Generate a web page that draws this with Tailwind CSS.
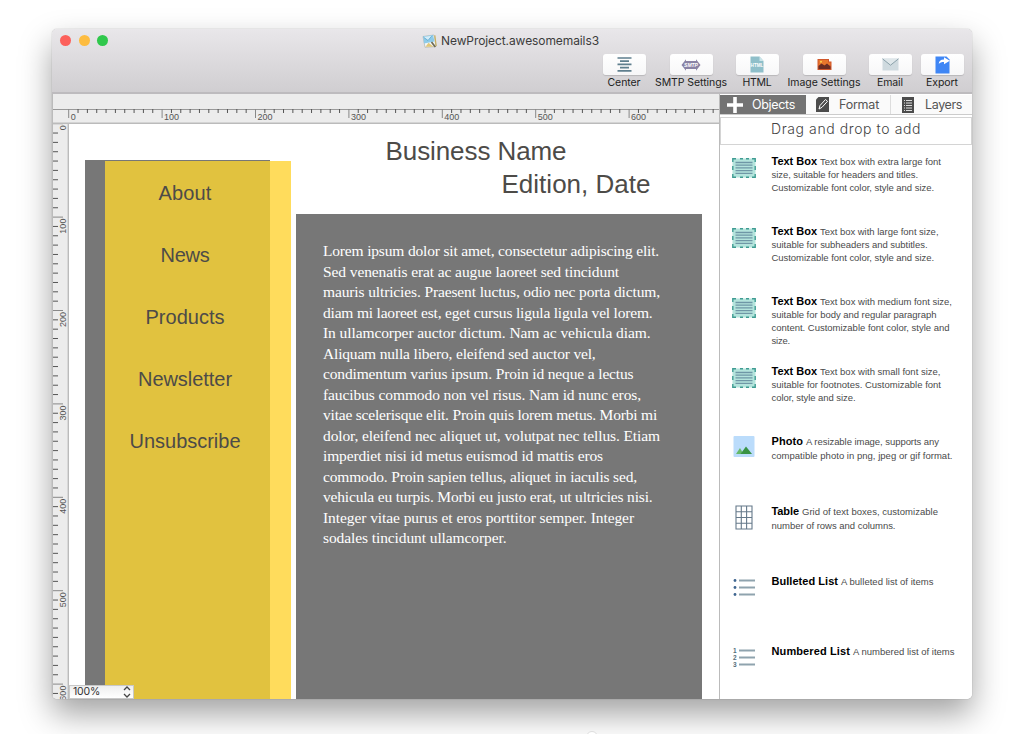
<!DOCTYPE html>
<html lang="en">
<head>
<meta charset="utf-8">
<title>NewProject.awesomemails3</title>
<script src="https://cdn.jsdelivr.net/npm/@tailwindcss/browser@4"></script>
</head>
<body class="bg-white w-[1024px] h-[734px] overflow-hidden relative font-['Liberation_Sans',sans-serif]">
<svg class="hidden">
  <symbol id="textbox" viewBox="0 0 24 20">
    <rect x=".5" y=".5" width="23" height="19" fill="#b4e4dc"/>
    <path d="M.8 4V.8H4M8 .8h3M14 .8h3M20 .8h3.200V4M23.200 8v4M23.200 16v3.200H20M17 19.200h-3M11 19.200H8M4 19.200H.8V16M.8 12V8" fill="none" stroke="#3f9c92" stroke-width="1.400"/>
    <path d="M3.500 4.500h17M3.500 7.200h17M3.500 9.900h17M3.500 12.600h17M3.500 15.300h17" stroke="#6f97a6" stroke-width="1.300"/>
  </symbol>
</svg>

<main class="ml-[52px] mt-[29px] w-[920px] h-[670px] rounded-[5px] overflow-hidden bg-white flex flex-col shadow-[0_0_1px_rgba(0,0,0,0.45),0_15px_32px_rgba(0,0,0,0.37)]">
  <header class="h-[65px] shrink-0 bg-linear-to-b from-[#e9e7ea] to-[#d0ced1] border-b-2 border-[#bdbbbe] flex flex-col">
    <div class="relative h-[24px] flex items-center justify-center">
      <div class="absolute left-[8px] top-[6px] flex gap-[7.5px]">
        <i class="size-[11px] rounded-full bg-[#fc605b]"></i><i class="size-[11px] rounded-full bg-[#fdbc40]"></i><i class="size-[11px] rounded-full bg-[#30c84c]"></i>
      </div>
      <div class="flex items-center -ml-[3px]">
      <svg class="w-[15px] h-[14px] mr-[4px]" viewBox="0 0 15 14"><path d="M1 2.5 12 1l2 11.5-11 .8z" fill="#f3f6f5" stroke="#a5aaa5" stroke-width=".6"/><path d="M1.200 2.500 11 1l1.500 6.500L2 9.500z" fill="#8ecbe9"/><path d="M1.300 3 6 6.500l4-4.800" fill="#d4edf8" stroke="#4f9fca" stroke-width=".7"/><path d="m3.500 12.700 3-4 5 4z" fill="#e1c779"/><path d="m9.500 8 3.800 5" stroke="#6d6a55" stroke-width="1.700"/><path d="M12.800 1.300 14.200 12" stroke="#c7b05e" stroke-width="1.200"/></svg>
      <span class="font-[Inter,sans-serif] text-[12px] leading-[24px] text-[#3c3c3c] whitespace-nowrap" data-w="158">NewProject.awesomemails3</span>
      </div>
    </div>
    <div class="flex ml-[550.5px] font-[Inter,sans-serif] text-[10.5px] text-[#222]">
      <div class="w-[43px] flex flex-col items-center"><b class="w-[43px] h-[21px] mt-px rounded-[3px] bg-linear-to-b from-white to-[#f7f7f8] shadow-[0_1px_1px_#b9b7ba] flex items-center justify-center"><svg class="w-[15px] h-[15px]" viewBox="0 0 15 15"><path d="M.5 1h14M3 4.200h9M.5 7.400h14M3 10.600h9M.5 13.800h14" stroke="#5f7f8e" stroke-width="1.700"/></svg></b><span class="leading-[13px] mt-px whitespace-nowrap" data-w="33">Center</span></div>
      <div class="w-[43px] ml-[24px] flex flex-col items-center"><b class="w-[43px] h-[21px] mt-px rounded-[3px] bg-linear-to-b from-white to-[#f7f7f8] shadow-[0_1px_1px_#b9b7ba] flex items-center justify-center"><svg class="w-[20px] h-[12px]" viewBox="0 0 20 12"><path d="M.5 6 5 .3v1.700h10V.3L19.500 6 15 11.700V10H5v1.700z" fill="#8a83a5"/><text x="10" y="8" text-anchor="middle" font-family="Liberation Sans" font-weight="bold" font-style="italic" font-size="5" fill="#fff">SMTP</text></svg></b><span class="leading-[13px] mt-px whitespace-nowrap" data-w="72">SMTP Settings</span></div>
      <div class="w-[43px] ml-[23px] flex flex-col items-center"><b class="w-[43px] h-[21px] mt-px rounded-[3px] bg-linear-to-b from-white to-[#f7f7f8] shadow-[0_1px_1px_#b9b7ba] flex items-center justify-center"><svg class="w-[14px] h-[17px]" viewBox="0 0 14 17"><path d="M.5.5h9L13.5 5v11.5H.5z" fill="#8fbfca"/><path d="M9.5.5V5h4z" fill="#cce6ea"/><text x="7" y="10.5" text-anchor="middle" font-family="Liberation Sans" font-weight="bold" font-size="4.6" fill="#fff">HTML</text></svg></b><span class="leading-[13px] mt-px whitespace-nowrap" data-w="29">HTML</span></div>
      <div class="w-[43px] ml-[24px] flex flex-col items-center"><b class="w-[43px] h-[21px] mt-px rounded-[3px] bg-linear-to-b from-white to-[#f7f7f8] shadow-[0_1px_1px_#b9b7ba] flex items-center justify-center"><svg class="w-[15px] h-[13px]" viewBox="0 0 15 13"><path d="M.5 1h11.500v2.500h2.500V12H.5z" fill="#d0562a"/><path d="M1.500 2h9.500v2.500h2.500v3H1.500z" fill="#e8762c"/><path d="m1.500 11 0-3 3-2.500 3 2 2.500-2 3.500 3V11z" fill="#6b2c22"/><circle cx="4" cy="3.800" r="1" fill="#ffd24c"/></svg></b><span class="leading-[13px] mt-px whitespace-nowrap" data-w="73">Image Settings</span></div>
      <div class="w-[43px] ml-[23px] flex flex-col items-center"><b class="w-[43px] h-[21px] mt-px rounded-[3px] bg-linear-to-b from-white to-[#f7f7f8] shadow-[0_1px_1px_#b9b7ba] flex items-center justify-center"><svg class="w-[17px] h-[13px]" viewBox="0 0 17 13"><path d="M.5.5h16v12H.5z" fill="#cfdadf"/><path d="m.5.8 8 6.400 8-6.400" fill="#dfe7ea" stroke="#8ba1aa" stroke-width="1"/></svg></b><span class="leading-[13px] mt-px whitespace-nowrap" data-w="26">Email</span></div>
      <div class="w-[43px] ml-[9px] flex flex-col items-center"><b class="w-[43px] h-[21px] mt-px rounded-[3px] bg-linear-to-b from-white to-[#f7f7f8] shadow-[0_1px_1px_#b9b7ba] flex items-center justify-center"><svg class="w-[15px] h-[18px]" viewBox="0 0 15 18"><path d="M.5.5h11l3 3v14H.5z" fill="#3f86f5"/><path d="M3.800 8c0-3 1.700-4.500 5.200-4.500V1.200L14.800 4.800 9 8.300V6C6.500 6 5 6.500 3.800 8z" fill="#fff"/></svg></b><span class="leading-[13px] mt-px whitespace-nowrap" data-w="32">Export</span></div>
    </div>
  </header>

  <div class="flex flex-1 min-h-0">
    <section class="w-[667px] flex flex-col">
      <svg id="ruler-x" class="block w-[667px] h-[30px] bg-[#ececec] shrink-0" viewBox="52 94 667 30"></svg>
      <div class="flex flex-1 min-h-0">
        <svg id="ruler-y" class="block w-[17px] h-[575px] bg-[#ececec] shrink-0" viewBox="52 124 17 575"></svg>
        <div class="relative flex-1 bg-white overflow-hidden text-[#4d4b48]">
          <div class="absolute left-[16px] top-[35.5px] w-[185px] h-[550px] bg-[#777]"></div>
          <div class="absolute left-[35.5px] top-[36.5px] w-[186.5px] h-[550px] bg-[#ffdc5c]"></div>
          <div class="absolute left-[35.5px] top-[36.5px] w-[165.5px] h-[550px] bg-[#e1c23f]"></div>
          <nav class="absolute left-[36px] top-[38px] w-[160px] flex flex-col items-center text-[20px] leading-[62px]">
            <span data-w="53">About</span><span data-w="49">News</span><span data-w="79">Products</span><span data-w="94">Newsletter</span><span data-w="111">Unsubscribe</span>
          </nav>
          <h1 class="absolute left-[316.5px] top-[9.5px] text-[26px] leading-[34px] whitespace-nowrap"><span data-w="181">Business Name</span></h1>
          <h2 class="absolute left-[432.5px] top-[43px] text-[26px] leading-[34px] whitespace-nowrap"><span data-w="149">Edition, Date</span></h2>
          <article id="copy" class="absolute left-[227px] top-[90px] w-[406px] h-[490px] bg-[#777] pl-[27px] pt-[27px] text-[15.5px] leading-[20.5px] text-white font-['Liberation_Serif',serif] whitespace-nowrap"></article>
          <div class="absolute left-0 top-[560.5px] w-[65px] h-[14px] bg-linear-to-b from-[#eee] to-white border border-[#c8c8c8] flex items-center justify-between pl-[3px] pr-[2px] font-[Inter,sans-serif] text-[10.5px] leading-[12px] text-[#333]">
            <span data-w="27">100%</span>
            <svg class="w-[8px] h-[12px]" viewBox="0 0 8 12" fill="none" stroke="#444" stroke-width="1.3"><path d="m1 4 3-3 3 3M1 8l3 3 3-3"/></svg>
          </div>
        </div>
      </div>
    </section>

    <aside class="w-[253px] border-l border-[#bbb] bg-white flex flex-col">
      <div class="flex h-[21px] shrink-0 pt-px border-b border-[#ccc] text-[12.5px] text-[#555] font-[Inter,sans-serif] leading-[19px]">
        <div class="w-[86px] bg-[#737373] text-white flex items-center pl-[7px] gap-[9px]"><svg class="size-[16px]" viewBox="0 0 16 16"><path d="M8 0v16M0 8h16" stroke="#fff" stroke-width="3.6"/></svg><span data-w="43">Objects</span></div>
        <div class="w-[85px] flex items-center pl-[10px] gap-[10px] border-r border-[#ddd] bg-[#fafafa]"><svg class="w-[13px] h-[15px]" viewBox="0 0 13 15"><path d="M2.5 0H13v15H0V2.5z" fill="#4c4c4c"/><path d="m3 12 1-3.5 5.500-6 2 1.800-5.500 6z" fill="none" stroke="#fff" stroke-width="1"/></svg><span data-w="40">Format</span></div>
        <div class="flex-1 flex items-center pl-[11px] gap-[11px] bg-[#fafafa]"><svg class="w-[12px] h-[16px]" viewBox="0 0 12 16"><path d="M0 0h12v16H0z" fill="#4c4c4c"/><path d="M4 3.5h6M4 6h6M4 8.5h6M4 11h6M4 13.5h6" stroke="#ddd"/><path d="M2 3.5h1M2 6h1M2 8.5h1M2 11h1M2 13.5h1" stroke="#ddd"/></svg><span data-w="37">Layers</span></div>
      </div>
      <div class="mt-[2px] h-[28px] shrink-0 border border-[#d4d4d4] text-center text-[14px] leading-[22px] text-[#444] font-[Inter,sans-serif] font-light"><span data-w="150">Drag and drop to add</span></div>
      <div id="objects" class="mt-[10px] text-[#4a4a4a]"></div>
    </aside>
  </div>
</main>
<i class="absolute left-[586px] top-[731px] w-[12px] h-[12px] rounded-full bg-white border border-[#ddd]"></i>

<template id="icons">
  <svg class="w-[24px] h-[20px] mt-[3px]"><use href="#textbox"/></svg>
  <svg class="w-[24px] h-[24px]" viewBox="0 0 24 24"><rect x="1.5" y="1" width="21" height="21" rx="1" fill="#bbdcfb"/><path d="m4 19 4-6 3.5 6z" fill="#66b96a"/><path d="m8.5 19 5.500-7.500 6 7.500z" fill="#399344"/></svg>
  <svg class="w-[24px] h-[26px]" viewBox="0 0 24 26"><path d="M4 1h16v23H4zM9.3 1v23M14.6 1v23M4 6.8h16M4 12.5h16M4 18.2h16" fill="none" stroke="#65798a" stroke-width="1.1"/></svg>
  <svg class="w-[24px] h-[24px]" viewBox="0 0 24 24"><path d="M7 5.5h16M7 12.5h16M7 19.5h16" stroke="#8fa3ae" stroke-width="1.8"/><g fill="#3f6690"><circle cx="3" cy="5.5" r="1.4"/><circle cx="3" cy="12.5" r="1.4"/><circle cx="3" cy="19.5" r="1.4"/></g></svg>
  <svg class="w-[24px] h-[24px]" viewBox="0 0 24 24"><path d="M7 5.5h16M7 12.5h16M7 19.5h16" stroke="#8fa3ae" stroke-width="1.8"/><g fill="#546e7a" font-family="Liberation Sans" font-weight="bold" font-size="6.5"><text x="1" y="8">1</text><text x="1" y="15">2</text><text x="1" y="22">3</text></g></svg>
</template>

<script>
const icons = [...document.getElementById('icons').content.children];
const objects = [
  [0, 'Text Box', 'Text box with extra large font', 169.5, 'size, suitable for headers and titles.', 146.5, 'Customizable font color, style and size.', 162.5],
  [0, 'Text Box', 'Text box with large font size,', 167, 'suitable for subheaders and subtitles.', 156, 'Customizable font color, style and size.', 162.5],
  [0, 'Text Box', 'Text box with medium font size,', 180.5, 'suitable for body and regular paragraph', 165, 'content. Customizable font color, style and', 178, 'size.', 18.5],
  [0, 'Text Box', 'Text box with small font size,', 169, 'suitable for footnotes. Customizable font', 169.5, 'color, style and size.', 84],
  [1, 'Photo', 'A resizable image, supports any', 167.5, 'compatible photo in png, jpeg or gif format.', 181],
  [2, 'Table', 'Grid of text boxes, customizable', 166.5, 'number of rows and columns.', 124],
  [3, 'Bulleted List', 'A bulleted list of items', 162],
  [4, 'Numbered List', 'A numbered list of items', 183]
];
const titleWidth = {'Text Box': 45.5, 'Photo': 31.5, 'Table': 27.5, 'Bulleted List': 66.5, 'Numbered List': 78.5};
const list = document.getElementById('objects');
for (const [icon, title, first, w, ...rest] of objects) {
  const row = document.createElement('div');
  row.className = 'flex h-[70px] pl-[11.5px] gap-[16px]';
  row.append(icons[icon].cloneNode(true));
  const t = titleWidth[title];
  let html = `<p class="flex items-baseline gap-[3px] h-[13px]"><b class="text-[11px] text-black" data-w="${t}">${title}</b><span data-w="${w - t - 3}">${first}</span></p>`;
  for (let i = 0; i < rest.length; i += 2) html += `<p class="${icon ? 'pt-px' : ''}"><span data-w="${rest[i + 1]}">${rest[i]}</span></p>`;
  const body = document.createElement('div');
  body.className = 'text-[9.5px] leading-[13px] whitespace-nowrap';
  body.innerHTML = html;
  row.append(body);
  list.append(row);
}

const copy = [
  ['Lorem ipsum dolor sit amet, consectetur adipiscing elit.', 336], ['Sed venenatis erat ac augue laoreet sed tincidunt', 296],
  ['mauris ultricies. Praesent luctus, odio nec porta dictum,', 337], ['diam mi laoreet est, eget cursus ligula ligula vel lorem.', 329.5],
  ['In ullamcorper auctor dictum. Nam ac vehicula diam.', 327.5], ['Aliquam nulla libero, eleifend sed auctor vel,', 272.5],
  ['condimentum varius ipsum. Proin id neque a lectus', 310.5], ['faucibus commodo non vel risus. Nam id nunc eros,', 318],
  ['vitae scelerisque elit. Proin quis lorem metus. Morbi mi', 334], ['dolor, eleifend nec aliquet ut, volutpat nec tellus. Etiam', 337],
  ['imperdiet nisi id metus euismod id mattis eros', 280], ['commodo. Proin sapien tellus, aliquet in iaculis sed,', 314],
  ['vehicula eu turpis. Morbi eu justo erat, ut ultricies nisi.', 329.5], ['Integer vitae purus et eros porttitor semper. Integer', 311],
  ['sodales tincidunt ullamcorper.', 183.5]
];
document.getElementById('copy').innerHTML = copy.map(([t, w]) => `<p><span data-w="${w}">${t}</span></p>`).join('');

const step = 9.34;
let h = '<path d="M52 109.5H719" stroke="#999" stroke-width="1.2"/><path d="M52 123.3H719" stroke="#bbb" stroke-width="1.4"/><path d="M52.5 94v30" stroke="#bbb"/>';
for (let i = 0; i < 70; i++) {
  const x = 68.7 + i * step, major = i % 10 === 0;
  h += `<path d="M${x} 109v${major ? 9 : 4}" stroke="${major ? '#888' : '#555'}"/>`;
  if (major) h += `<text x="${x + 2}" y="119.5" font-size="9" fill="#555">${i * 10}</text>`;
}
document.getElementById('ruler-x').innerHTML = h;
let v = '<path d="M52.5 124v575" stroke="#bbb"/><path d="M68.3 124v575" stroke="#bbb" stroke-width="1.4"/>';
for (let i = 0; i < 62; i++) {
  const y = 123.7 + i * step, major = i % 10 === 0;
  v += `<path d="M53 ${y}h${major ? 10 : 5}" stroke="${major ? '#888' : '#555'}"/>`;
  if (major) v += `<text transform="translate(66 ${y + 1.5}) rotate(-90)" text-anchor="end" font-size="9" fill="#555">${i * 10}</text>`;
}
document.getElementById('ruler-y').innerHTML = v;

// Track each label so it fills its designed width.
function fit() {
  for (const el of document.querySelectorAll('[data-w]')) {
    el.style.display = 'inline-block';
    el.style.whiteSpace = 'nowrap';
    el.style.flexShrink = '0';
    el.style.letterSpacing = '0px';
    const s = (el.dataset.w - el.getBoundingClientRect().width) / el.textContent.length;
    el.style.letterSpacing = s + 'px';
  }
}
fit();
addEventListener('load', () => { fit(); requestAnimationFrame(fit); setTimeout(fit, 50); });
document.fonts.ready.then(fit);
new ResizeObserver(fit).observe(document.querySelector('main'));
</script>
</body>
</html>
